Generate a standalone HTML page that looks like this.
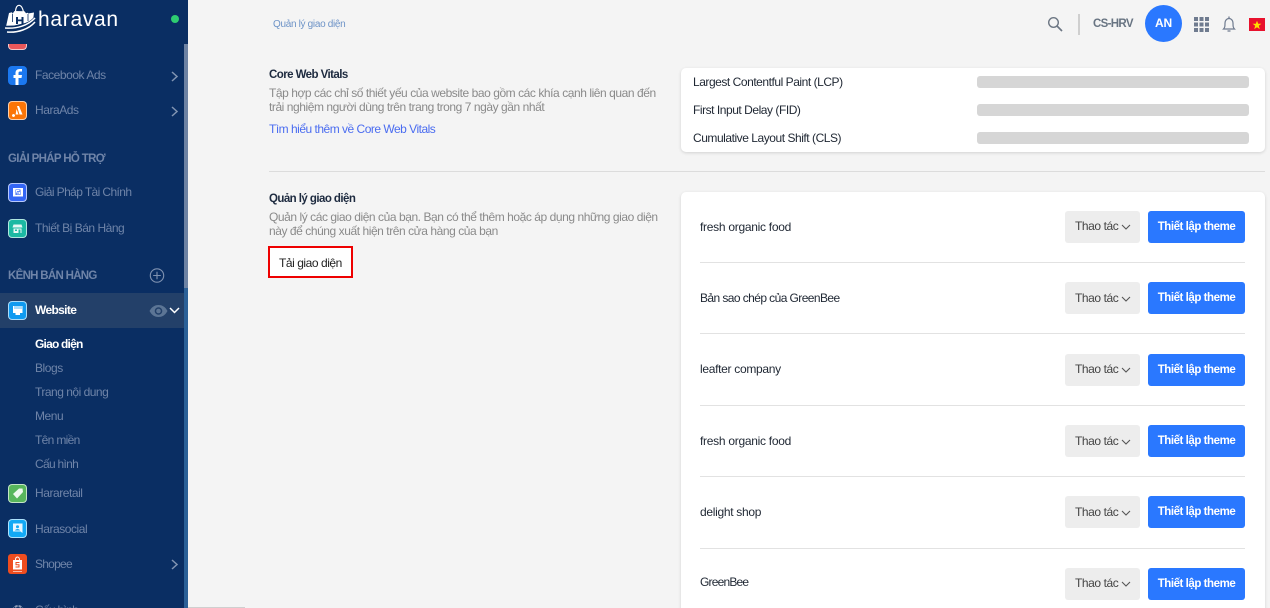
<!DOCTYPE html>
<html lang="vi"><head><meta charset="utf-8"><title>Quản lý giao diện</title>
<style>
*{box-sizing:border-box}
html,body{margin:0;padding:0;width:1270px;height:608px;overflow:hidden;background:#f4f4f4;font-family:"Liberation Sans",Arial,sans-serif}
#w{position:relative;width:1270px;height:608px;overflow:hidden;background:#f4f4f4}
.t{position:absolute;white-space:nowrap;font-size:12px;line-height:16px;letter-spacing:-.45px}
.side{position:absolute;left:0;top:0;width:188px;height:608px;background:#0a2e63;overflow:hidden}
.nv{color:#6f84a8;left:35px}
.sub{color:#6f84a8;left:35px}
.hd{color:#6f84a8;left:8px;font-weight:bold;font-size:11.5px;letter-spacing:-.65px}
.ic{position:absolute;left:8px;width:19px;height:19px;border-radius:4px;border:1px solid rgba(255,255,255,.65)}
.card{position:absolute;background:#fff;border-radius:5px;box-shadow:0 1px 3px rgba(0,0,0,.14)}
.bar{position:absolute;left:977px;width:272px;height:12px;background:#d6d6d6;border-radius:3px}
.btn1{position:absolute;left:1065px;width:75px;height:32px;background:#ededed;border-radius:3px}
.btn2{position:absolute;left:1148px;width:97px;height:32px;background:#2a78ff;border-radius:3px;color:#fff;font-weight:bold;font-size:11.5px;line-height:32px;text-align:center;letter-spacing:-.45px}
.ln{position:absolute;left:700px;width:545px;height:1px;background:#e2e2e2}
.name{color:#1f2733;left:700px;letter-spacing:-.28px}
.ds{left:269px;color:#8a8a8a;letter-spacing:-.44px}
.ti{left:269px;color:#1d2a3f;font-weight:bold;font-size:11.5px;letter-spacing:-.56px}
.lb{left:693px;color:#1f2733;letter-spacing:-.46px}
.th{left:1075px;color:#444;letter-spacing:-.42px}
</style></head><body>
<div id="w">

<div class="side">
  <!-- logo -->
  <svg style="position:absolute;left:0;top:0" width="40" height="36" viewBox="0 0 40 36">
    <path d="M15.500 11C16 7 17 5.300 19 5.300S22.500 7.500 23.500 12" fill="none" stroke="#fff" stroke-width="1.200"/>
    <path d="M9 13l3-.8 .5 1.500 2-2.700 10 .3 1.500 2 2-.6v.8l6-1-.8 7-8 3.500-11 2.500-8 .3z" fill="#fff"/>
    <path d="M16 17h2v2.500h3.500V17h2v7h-2v-2.800H18V24h-2z" fill="#0a2e63"/>
    <path d="M12.500 14v8M28 14v7" stroke="#0a2e63" stroke-width=".8"/>
    <path d="M5 28C17 29 28 25.500 35 18" fill="none" stroke="#0a2e63" stroke-width="2.600"/>
    <path d="M5 28C17 29 28 25.500 35 18" fill="none" stroke="#fff" stroke-width="1.500"/>
    <path d="M7 32C18 33 29 29 35 22" fill="none" stroke="#fff" stroke-width="1.500"/>
  </svg>
  <div class="t" style="left:38px;top:7px;color:#fff;font-size:21px;line-height:26px;letter-spacing:.7px">haravan</div>
  <div style="position:absolute;left:171px;top:15px;width:8px;height:8px;border-radius:50%;background:#2ecc71"></div>

  <div style="position:absolute;left:8px;top:44px;width:19px;height:6px;background:#e9575a;border-radius:0 0 4px 4px;border:1px solid #f5c7c8;border-top:0"></div>

  <div style="position:absolute;left:8px;top:66px;width:19px;height:19px;border-radius:4px;background:#1b78f0"></div>
  <svg style="position:absolute;left:8px;top:66px" width="19" height="19" viewBox="0 0 19 19"><path d="M10.500 19v-7h3l.5-3h-3.500V7c0-1 .5-1.500 1.500-1.500h2V3h-2.500C9 3 7.500 4.500 7.500 7v2H5.500v3h2v7z" fill="#fff"/></svg>
  <div class="t nv" style="top:67px">Facebook Ads</div>
  <svg style="position:absolute;left:170px;top:71px" width="9" height="11" viewBox="0 0 9 11"><path d="M2 1l5 4.500L2 10" fill="none" stroke="#8194b2" stroke-width="1.500"/></svg>

  <div class="ic" style="top:101px;background:#fb7507"></div>
  <svg style="position:absolute;left:8px;top:101px" width="19" height="19" viewBox="0 0 19 19"><path d="M9 5h2l3.500 8.500h-3zM8.500 8l2 5.500H7.600zM5.500 13a1.500 1.500 0 1 0 .01 0" fill="#fff"/></svg>
  <div class="t nv" style="top:102px">HaraAds</div>
  <svg style="position:absolute;left:170px;top:106px" width="9" height="11" viewBox="0 0 9 11"><path d="M2 1l5 4.500L2 10" fill="none" stroke="#8194b2" stroke-width="1.500"/></svg>

  <div class="t hd" style="top:151px">GIẢI PHÁP HỖ TRỢ</div>

  <div class="ic" style="top:183px;background:#3466f6"></div>
  <svg style="position:absolute;left:8px;top:183px" width="19" height="19" viewBox="0 0 19 19"><rect x="5" y="5" width="10" height="8.500" fill="#fff"/><rect x="7.500" y="6.500" width="5" height="5.500" fill="#3466f6"/><path d="M11.500 7.500h-3v1.700h3v1.700h-3" fill="none" stroke="#fff" stroke-width=".9"/></svg>
  <div class="t nv" style="top:184px;letter-spacing:-.6px">Giải Pháp Tài Chính</div>

  <div class="ic" style="top:219px;background:#1cb9a3"></div>
  <svg style="position:absolute;left:8px;top:219px" width="19" height="19" viewBox="0 0 19 19"><path d="M5.500 5.500h8l1 3h-10z" fill="#e6f7f4"/><rect x="5.500" y="9.500" width="8" height="4.500" fill="#e6f7f4"/><rect x="10.500" y="10.500" width="2" height="3.500" fill="#1cb9a3"/><rect x="7" y="10.500" width="2" height="1.500" fill="#1cb9a3"/></svg>
  <div class="t nv" style="top:220px;letter-spacing:-.48px">Thiết Bị Bán Hàng</div>

  <div class="t hd" style="top:268px;letter-spacing:-.7px">KÊNH BÁN HÀNG</div>
  <svg style="position:absolute;left:149px;top:268px" width="16" height="16" viewBox="0 0 16 16"><circle cx="8" cy="7.500" r="6.700" fill="none" stroke="#7f92b1" stroke-width="1.100"/><path d="M8 3.700v7.600M4.200 7.500h7.600" stroke="#7f92b1" stroke-width="1.100"/></svg>

  <div style="position:absolute;left:0;top:293px;width:184px;height:35px;background:#234069"></div>
  <div class="ic" style="top:301px;background:#0f9af0"></div>
  <svg style="position:absolute;left:8px;top:301px" width="19" height="19" viewBox="0 0 19 19"><rect x="5" y="5" width="9.500" height="7" fill="#fff"/><path d="M7 5v3M9 5v3M11 5v3M13 5v3" stroke="#0f9af0" stroke-width=".7"/><rect x="7.500" y="12" width="4.500" height="2" fill="#fff"/></svg>
  <div class="t" style="left:35px;top:302px;color:#fff;font-weight:bold;letter-spacing:-.65px">Website</div>
  <svg style="position:absolute;left:149px;top:304px" width="19" height="14" viewBox="0 0 19 14"><path d="M.5 7C3 2.500 6 1 9.500 1S16 2.500 18.500 7C16 11.500 13 13 9.500 13S3 11.500 .5 7z" fill="#5c7595"/><circle cx="9.500" cy="7" r="3.800" fill="#234069"/><circle cx="9.500" cy="7" r="2.300" fill="#5c7595"/></svg>
  <svg style="position:absolute;left:169px;top:306px" width="11" height="9" viewBox="0 0 11 9"><path d="M1 2l4.500 4.500L10 2" fill="none" stroke="#fff" stroke-width="1.500"/></svg>

  <div class="t" style="left:35px;top:336px;color:#fff;font-weight:bold;letter-spacing:-.8px">Giao diện</div>
  <div class="t sub" style="top:360px">Blogs</div>
  <div class="t sub" style="top:384px;letter-spacing:-.5px">Trang nội dung</div>
  <div class="t sub" style="top:408px">Menu</div>
  <div class="t sub" style="top:432px;letter-spacing:-.67px">Tên miền</div>
  <div class="t sub" style="top:456px;letter-spacing:-.7px">Cấu hình</div>

  <div class="ic" style="top:484px;background:#58b65c"></div>
  <svg style="position:absolute;left:8px;top:484px" width="19" height="19" viewBox="0 0 19 19"><path d="M5 10l6-5.500h3.500l.5 3.500-6 6.500z" fill="#eef8ee"/></svg>
  <div class="t nv" style="top:485px">Hararetail</div>

  <div class="ic" style="top:519px;background:#12a9f5"></div>
  <svg style="position:absolute;left:8px;top:519px" width="19" height="19" viewBox="0 0 19 19"><path d="M5 4.500h9.500v9.500l-2-1.500H5z" fill="#e8f6ff"/><circle cx="9.500" cy="7.700" r="1.500" fill="#12a9f5"/><path d="M7 11.500c.5-2 4.500-2 5 0z" fill="#12a9f5"/></svg>
  <div class="t nv" style="top:521px">Harasocial</div>

  <div style="position:absolute;left:8px;top:554px;width:19px;height:20px;border-radius:3px;background:#ee4d1f"></div>
  <svg style="position:absolute;left:8px;top:554px" width="19" height="20" viewBox="0 0 19 20"><path d="M5 6h9v9.500H5z" fill="#fff"/><path d="M7.500 6c0-4 4-4 4 0" fill="none" stroke="#fff"/><path d="M11.500 8.500h-3.500v2.200h3v2.300H7.500" fill="none" stroke="#ee4d1f" stroke-width="1"/><path d="M5 17.500h9" stroke="#f9b9a6" stroke-width="1"/></svg>
  <div class="t nv" style="top:556px;letter-spacing:-.75px">Shopee</div>
  <svg style="position:absolute;left:170px;top:559px" width="9" height="11" viewBox="0 0 9 11"><path d="M2 1l5 4.500L2 10" fill="none" stroke="#8194b2" stroke-width="1.500"/></svg>

  <svg style="position:absolute;left:10px;top:603px" width="16" height="16" viewBox="0 0 16 16"><circle cx="8" cy="8" r="5" fill="none" stroke="#8a9bb7" stroke-width="2" stroke-dasharray="3 1"/></svg>
  <div class="t nv" style="top:602px;letter-spacing:-.7px">Cấu hình</div>

  <div style="position:absolute;left:184px;top:44px;width:4px;height:244px;background:#6d82a3"></div>
  <div style="position:absolute;left:184px;top:288px;width:4px;height:320px;background:#2b6097"></div>
</div>
<div style="position:absolute;left:188px;top:607px;width:57px;height:1px;background:#cfcfcf"></div>

<!-- header -->
<div class="t" style="left:273px;top:17px;color:#6d93c7;font-size:10px;letter-spacing:-.32px">Quản lý giao diện</div>
<svg style="position:absolute;left:1047px;top:16px" width="16" height="16" viewBox="0 0 16 16"><circle cx="6.500" cy="6.500" r="4.800" fill="none" stroke="#6c7683" stroke-width="1.400"/><path d="M10 10l5 5" stroke="#6c7683" stroke-width="1.700"/></svg>
<div style="position:absolute;left:1078px;top:14px;width:2px;height:21px;background:#cfcfcf"></div>
<div class="t" style="left:1093px;top:16px;color:#687482;font-weight:bold;font-size:11.5px;letter-spacing:-.67px">CS-HRV</div>
<div style="position:absolute;left:1145px;top:5px;width:37px;height:37px;border-radius:50%;background:#2a78ff"></div>
<div class="t" style="left:1145px;top:15px;width:37px;text-align:center;color:#fff;font-weight:bold;letter-spacing:-.2px">AN</div>
<svg style="position:absolute;left:1194px;top:17px" width="15" height="15" viewBox="0 0 15 15" fill="#6f7b8f"><rect width="4" height="4"/><rect x="5.500" width="4" height="4"/><rect x="11" width="4" height="4"/><rect y="5.500" width="4" height="4"/><rect x="5.500" y="5.500" width="4" height="4"/><rect x="11" y="5.500" width="4" height="4"/><rect y="11" width="4" height="4"/><rect x="5.500" y="11" width="4" height="4"/><rect x="11" y="11" width="4" height="4"/></svg>
<svg style="position:absolute;left:1222px;top:16px" width="14" height="17" viewBox="0 0 14 17"><path d="M1.500 13c1.500-1.500 1.500-3 1.500-6 0-2.500 1.800-4.500 4-4.500s4 2 4 4.500c0 3 0 4.500 1.500 6z" fill="none" stroke="#6f7b8f" stroke-width="1.200"/><path d="M7 .5v2M5.500 15h3" stroke="#6f7b8f" stroke-width="1.300"/></svg>
<div style="position:absolute;left:1249px;top:18px;width:16px;height:13px;background:#e8112d"></div>
<svg style="position:absolute;left:1252px;top:19.500px" width="10" height="10" viewBox="0 0 10 10"><path d="M5 .8l1.200 3h3.200L6.800 5.800l1 3.300L5 7.200 2.200 9.100l1-3.300L.6 3.800h3.200z" fill="#ffde00"/></svg>

<!-- CWV -->
<div class="t ti" style="top:67px">Core Web Vitals</div>
<div class="t ds" style="top:85px">Tập hợp các chỉ số thiết yếu của website bao gồm các khía cạnh liên quan đến</div>
<div class="t ds" style="top:99px">trải nghiệm người dùng trên trang trong 7 ngày gần nhất</div>
<div class="t" style="left:269px;top:121px;color:#4a6cf0;letter-spacing:-.5px">Tìm hiểu thêm về Core Web Vitals</div>

<div class="card" style="left:681px;top:68px;width:584px;height:84px"></div>
<div class="t lb" style="top:74px">Largest Contentful Paint (LCP)</div>
<div class="t lb" style="top:102px">First Input Delay (FID)</div>
<div class="t lb" style="top:130px">Cumulative Layout Shift (CLS)</div>
<div class="bar" style="top:76px"></div>
<div class="bar" style="top:104px"></div>
<div class="bar" style="top:132px"></div>

<div style="position:absolute;left:269px;top:171px;width:996px;height:1px;background:#dcdcdc"></div>

<!-- themes -->
<div class="t ti" style="top:191px">Quản lý giao diện</div>
<div class="t ds" style="top:209px">Quản lý các giao diện của bạn. Bạn có thể thêm hoặc áp dụng những giao diện</div>
<div class="t ds" style="top:223px">này để chúng xuất hiện trên cửa hàng của bạn</div>
<div style="position:absolute;left:268px;top:246px;width:85px;height:32px;background:#fff;border:2px solid #ee0000"></div>
<div class="t" style="left:279px;top:255px;color:#222;letter-spacing:-.45px">Tải giao diện</div>

<div class="card" style="left:681px;top:192px;width:584px;height:430px"></div>

<div class="t name" style="top:219px">fresh organic food</div>
<div class="btn1" style="top:211px"></div><div class="t th" style="top:218px">Thao tác</div>
<svg style="position:absolute;left:1121px;top:224px" width="10" height="7" viewBox="0 0 10 7"><path d="M1 1l4 4 4-4" fill="none" stroke="#555" stroke-width="1.100"/></svg>
<div class="btn2" style="top:211px">Thiết lập theme</div>
<div class="ln" style="top:262px"></div>

<div class="t name" style="top:290px;letter-spacing:-.58px">Bản sao chép của GreenBee</div>
<div class="btn1" style="top:282px"></div><div class="t th" style="top:290px">Thao tác</div>
<svg style="position:absolute;left:1121px;top:296px" width="10" height="7" viewBox="0 0 10 7"><path d="M1 1l4 4 4-4" fill="none" stroke="#555" stroke-width="1.100"/></svg>
<div class="btn2" style="top:282px">Thiết lập theme</div>
<div class="ln" style="top:333px"></div>

<div class="t name" style="top:361px;letter-spacing:-.3px">leafter company</div>
<div class="btn1" style="top:354px"></div><div class="t th" style="top:361px">Thao tác</div>
<svg style="position:absolute;left:1121px;top:367px" width="10" height="7" viewBox="0 0 10 7"><path d="M1 1l4 4 4-4" fill="none" stroke="#555" stroke-width="1.100"/></svg>
<div class="btn2" style="top:354px">Thiết lập theme</div>
<div class="ln" style="top:405px"></div>

<div class="t name" style="top:433px">fresh organic food</div>
<div class="btn1" style="top:425px"></div><div class="t th" style="top:433px">Thao tác</div>
<svg style="position:absolute;left:1121px;top:439px" width="10" height="7" viewBox="0 0 10 7"><path d="M1 1l4 4 4-4" fill="none" stroke="#555" stroke-width="1.100"/></svg>
<div class="btn2" style="top:425px">Thiết lập theme</div>
<div class="ln" style="top:476px"></div>

<div class="t name" style="top:504px;letter-spacing:-.3px">delight shop</div>
<div class="btn1" style="top:496px"></div><div class="t th" style="top:504px">Thao tác</div>
<svg style="position:absolute;left:1121px;top:510px" width="10" height="7" viewBox="0 0 10 7"><path d="M1 1l4 4 4-4" fill="none" stroke="#555" stroke-width="1.100"/></svg>
<div class="btn2" style="top:496px">Thiết lập theme</div>
<div class="ln" style="top:548px"></div>

<div class="t name" style="top:574px;letter-spacing:-.8px">GreenBee</div>
<div class="btn1" style="top:568px"></div><div class="t th" style="top:575px">Thao tác</div>
<svg style="position:absolute;left:1121px;top:581px" width="10" height="7" viewBox="0 0 10 7"><path d="M1 1l4 4 4-4" fill="none" stroke="#555" stroke-width="1.100"/></svg>
<div class="btn2" style="top:568px">Thiết lập theme</div>

</div>
</body></html>
